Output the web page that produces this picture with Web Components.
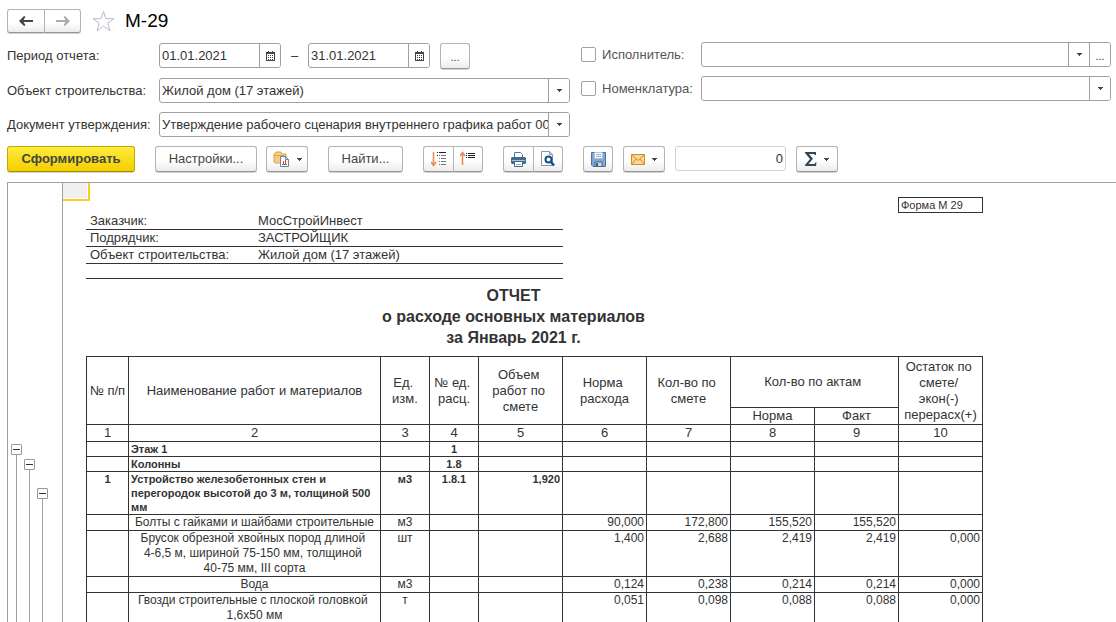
<!DOCTYPE html>
<html lang="ru">
<head>
<meta charset="utf-8">
<title>М-29</title>
<style>
  body { margin: 0; background: #fff; color: #333; font: 13px/16px "Liberation Sans", Arial, sans-serif; }
</style>
</head>
<body>
<report-app></report-app>
<script>
const base = `
  *, *::before, *::after { box-sizing: border-box; }
  button, input, select { font: inherit; color: inherit; margin: 0; }
`;

function element(name, html, setup) {
  const template = document.createElement('template');
  template.innerHTML = html;
  customElements.define(name, class extends HTMLElement {
    constructor() {
      super();
      this.attachShadow({ mode: 'open' });
    }
    connectedCallback() {
      if (this.shadowRoot.firstChild) return;
      this.shadowRoot.append(template.content.cloneNode(true));
      if (setup) setup(this, this.shadowRoot);
    }
  });
}

const icons = {
  back: [16, 12, '<path d="M1 6 6 1l1.500.8L5.500 5H15v2H5.500l2 3.200L6 11z" fill="#444"/>'],
  forward: [16, 12, '<path d="M15 6 10 1 8.500 1.800 10.500 5H1v2H10.500l-2 3.200L10 11z" fill="#aaa"/>'],
  star: [23, 22, '<path d="M11.500 1.500 14 8.700H22L15.700 13.200 18 20.700 11.500 16.200 5 20.700 7.300 13.200 1 8.700H9z" fill="#fff" stroke="#b9bcc4"/>'],
  calendar: [9, 10, '<path d="M0 1h9v9H0z" fill="#444"/><path d="M2 0h1v2H2zM6 0h1v2H6z" fill="#444"/><path d="M1 3h7v6H1z" fill="#fff"/><path d="M2 4h1v1H2zM4 4h1v1H4zM6 4h1v1H6zM2 6h1v1H2zM4 6h1v1H4zM6 6h1v1H6zM2 8h1v1H2zM4 8h1v1H4zM6 8h1v1H6z" fill="#444"/>'],
  caret: [5, 3, '<path d="M0 0h5v1H4v1H3v1H2V2H1V1H0z" fill="#444"/>'],
  variants: [17, 17, '<path d="M1 3 3 1h5l1 2h4v9H2L1 11z" fill="#f5cf80" stroke="#d9a64d"/><path d="M1.500 4.500h11" stroke="#d9a64d"/><path d="M7.500 5.500h5l3 3v7h-8z" fill="#fff" stroke="#6487a5"/><path d="M12.500 5.500v3h3" fill="none" stroke="#6487a5"/><path d="M10.500 10v3M12.500 9v4" stroke="#e33"/><path d="M9 13.500h5" stroke="#3aa357"/>'],
  expand: [16, 16, '<path d="M2.500 1v13M0 11l2.500 3.500L5 11" fill="none" stroke="#f0854e" stroke-width="1.500"/><path d="M6 1.500h1M8 1.500h7M6 4.500h1" stroke="#222"/><path d="M8 4.500h1M10 4.500h5M8 7.500h1M10 7.500h5M8 10.500h1M10 10.500h5M8 13.500h1M10 13.500h5" stroke="#777"/>'],
  collapse: [16, 16, '<path d="M2.500 2v12M0 5l2.500-3.500L5 5" fill="none" stroke="#f0854e" stroke-width="1.500"/><path d="M6 2.500h1M8 2.500h7M6 4.500h1M8 4.500h7M6 6.500h1M8 6.500h7" stroke="#222"/>'],
  print: [15, 15, '<path d="M3.500 5V.5h6l2 2V5" fill="#fff" stroke="#54799b"/><path d="M1 5h13l1 1v5l-1 1H1l-1-1V6z" fill="#416b92"/><path d="M1 8.500h13" stroke="#a7c0d6"/><path d="M3.500 9.500h8v5h-8z" fill="#fff" stroke="#416b92"/><path d="M5 12.500h5" stroke="#8fa9c0"/>'],
  preview: [16, 16, '<path d="M1.500.5h8l3 3v11h-11z" fill="#fff" stroke="#7a98b3"/><path d="M9.500.5v3h3" fill="none" stroke="#7a98b3"/><circle cx="8.500" cy="8.500" r="3" fill="#fff" stroke="#14507f" stroke-width="2"/><path d="M10.500 10.500 14 14.500" stroke="#14507f" stroke-width="2.500"/>'],
  save: [15, 15, '<path d="M.5.500h14v14H2l-1.500-1.500z" fill="#7fa8d3" stroke="#4576a3"/><path d="M3.500.500h8v6h-8z" fill="#fff" stroke="#a9c4de"/><path d="M5 2.500h5M5 4.500h5" stroke="#9ab"/><path d="M4 10h7v4.500H4z" fill="#cfd9d8" stroke="#47698b"/><path d="M5 11h2v3H5z" fill="#45607a"/>'],
  mail: [14, 11, '<path d="M.5.500h13v10H.500z" fill="#fbd98e" stroke="#cf8f2b"/><path d="M.500.500 7 6.500 13.500.500M.500 10.500 5 5M13.500 10.500 9 5" fill="none" stroke="#cf8f2b"/>'],
  sum: [12, 14, '<path d="M0 0h11v3h-1L9 2H4l4 4.700L3.500 12H9.500l1-1.500h1L11 14H0v-1l5-6L0 1z" fill="#2f4858"/>'],
};

element('ui-icon', `<style>:host { display: block; flex: none; } svg { display: block; }</style>`, (host, root) => {
  const [w, h, body] = icons[host.getAttribute('name')];
  root.innerHTML += `<svg width="${w}" height="${h}" viewBox="0 0 ${w} ${h}" aria-hidden="true">${body}</svg>`;
});

element('tool-button', `
<style>${base}
  :host { display: block; flex: none; }
  button { display: flex; align-items: center; justify-content: center; gap: 7px; width: 100%; height: var(--height, 26px);
    padding: 0; border: 1px solid #b3b3b3; border-bottom-color: #969696; border-radius: 3px;
    background: linear-gradient(#fff 55%, #ececec); box-shadow: 0 1px 0 #d4d4d4; color: #444; white-space: nowrap; }
  :host([primary]) button { border-color: #c7a600; border-bottom-color: #a88c00; background: linear-gradient(#ffec3d, #f2cf00); font-weight: bold; }
  :host([first]) button { border-radius: 3px 0 0 3px; border-right: 0; }
  :host([last]) button { border-radius: 0 3px 3px 0; }
  :host([small]) button { font-size: 11px; padding-top: 2px; }
</style>
<button type="button"><slot></slot></button>`, (host, root) => {
  if (host.title) root.querySelector('button').setAttribute('aria-label', host.title);
});

const fieldStyle = `
  .box { display: flex; height: 25px; border: 1px solid #a0a0a0; border-radius: 3px; background: #fff; overflow: hidden; }
  .box input, .box select { flex: 1; min-width: 0; border: 0; padding: 0 0 0 2px; background: none; outline: 0; appearance: none; text-overflow: clip; }
  .box button, .cell { display: flex; align-items: center; justify-content: center; width: 21px; flex: none; padding: 0; border: 0; border-left: 1px solid #a0a0a0; background: #fff; }
`;

element('date-field', `
<style>${base}${fieldStyle}
  :host { display: block; width: 122px; }
</style>
<div class="box"><input type="text"><button type="button" aria-label="Выбрать дату"><ui-icon name="calendar"></ui-icon></button></div>`, (host, root) => {
  const input = root.querySelector('input');
  input.value = host.getAttribute('value');
  input.setAttribute('aria-label', host.getAttribute('label'));
});

element('select-row', `
<style>${base}${fieldStyle}
  :host { display: flex; align-items: center; }
  .caption { flex: none; width: var(--caption, 152px); display: flex; align-items: center; gap: 6px; }
  .caption input { appearance: none; width: 15px; height: 15px; border: 1px solid #a0a0a0; border-radius: 2px; background: #fff; }
  .box { flex: 1; min-width: 0; }
  :host([filter]) label { color: #555; }
  .box .more { padding-top: 2px; font-size: 11px; }
</style>
<div class="caption"><label for="value"></label></div>
<div class="box"><select id="value"><option></option></select><span class="cell"><ui-icon name="caret"></ui-icon></span></div>`, (host, root) => {
  const label = root.querySelector('label');
  label.textContent = host.getAttribute('label');
  root.querySelector('option').textContent = host.getAttribute('value') || '';
  if (host.hasAttribute('filter')) {
    const check = document.createElement('input');
    check.type = 'checkbox';
    check.id = 'use';
    label.before(check);
    label.htmlFor = 'use';
    root.querySelector('select').setAttribute('aria-label', host.getAttribute('label'));
  }
  if (host.hasAttribute('more')) {
    const more = document.createElement('button');
    more.type = 'button';
    more.className = 'more';
    more.textContent = '...';
    root.querySelector('.box').append(more);
  }
});

element('period-row', `
<style>${base}
  :host { display: flex; align-items: center; }
  .caption { flex: none; width: 152px; }
  .dash { width: 27px; text-align: center; }
  tool-button { width: 30px; margin-left: 10px; }
</style>
<span class="caption">Период отчета:</span>
<date-field value="01.01.2021" label="Начало периода"></date-field>
<span class="dash">–</span>
<date-field value="31.01.2021" label="Конец периода"></date-field>
<tool-button small title="Выбрать период">...</tool-button>`);

element('title-bar', `
<style>${base}
  :host { display: flex; align-items: center; height: 25px; }
  tool-button { --height: 24px; width: 37px; }
  ui-icon.star { margin: 0 10px 0 11px; }
  h1 { margin: 0; font: 19px/24px "Liberation Sans", Arial, sans-serif; color: #000; }
</style>
<tool-button first title="Назад"><ui-icon name="back"></ui-icon></tool-button>
<tool-button last title="Вперед"><ui-icon name="forward"></ui-icon></tool-button>
<ui-icon class="star" name="star"></ui-icon>
<h1>М-29</h1>`);

element('report-toolbar', `
<style>${base}
  :host { display: flex; align-items: center; gap: 20px; }
  .group { display: flex; flex: none; }
  .spaced { gap: 9px; }
  .totals { gap: 10px; }
  .w30 { width: 30px; }
  .w42 { width: 42px; }
  .w75 { width: 75px; }
  .w102 { width: 102px; }
  .w128 { width: 128px; }
  input { width: 111px; height: 25px; padding: 0 2px; border: 1px solid #d0d0d0; border-radius: 3px; text-align: right; outline: 0; }
</style>
<tool-button primary class="w128">Сформировать</tool-button>
<div class="group spaced">
  <tool-button class="w102">Настройки...</tool-button>
  <tool-button class="w42" title="Варианты отчета"><ui-icon name="variants"></ui-icon><ui-icon name="caret"></ui-icon></tool-button>
</div>
<tool-button class="w75">Найти...</tool-button>
<div class="group">
  <tool-button first class="w30" title="Развернуть"><ui-icon name="expand"></ui-icon></tool-button>
  <tool-button last class="w30" title="Свернуть"><ui-icon name="collapse"></ui-icon></tool-button>
</div>
<div class="group">
  <tool-button first class="w30" title="Печать"><ui-icon name="print"></ui-icon></tool-button>
  <tool-button last class="w30" title="Просмотр"><ui-icon name="preview"></ui-icon></tool-button>
</div>
<div class="group totals">
  <tool-button class="w30" title="Сохранить"><ui-icon name="save"></ui-icon></tool-button>
  <tool-button class="w42" title="Отправить"><ui-icon name="mail"></ui-icon><ui-icon name="caret"></ui-icon></tool-button>
  <input type="text" value="0" aria-label="Сумма">
  <tool-button class="w42" title="Показатели"><ui-icon name="sum"></ui-icon><ui-icon name="caret"></ui-icon></tool-button>
</div>`);

element('outline-gutter', `
<style>${base}
  :host { display: flex; gap: 2px; width: 55px; flex: none; padding-left: 3px; border-right: 1px solid #a0a0a0; }
  .branch { display: flex; flex-direction: column; align-items: center; }
  .floor { padding-top: 261px; }
  .section { padding-top: 276px; }
  .work { padding-top: 305px; }
  button { width: 11px; height: 11px; flex: none; padding: 0; border: 1px solid #999; border-radius: 1px; background: linear-gradient(#333, #333) center / 7px 1px no-repeat #fff; }
  .line { flex: 1; width: 1px; background: #a0a0a0; }
</style>
<div class="branch floor"><button type="button" aria-label="Свернуть этаж"></button><span class="line"></span></div>
<div class="branch section"><button type="button" aria-label="Свернуть раздел"></button><span class="line"></span></div>
<div class="branch work"><button type="button" aria-label="Свернуть работу"></button><span class="line"></span></div>`);

element('materials-table', `
<style>${base}
  :host { display: block; }
  table { border-collapse: collapse; table-layout: fixed; width: 897px; }
  th, td { border: 1px solid #333; padding: 0 2px; vertical-align: top; }
  th { font-weight: normal; vertical-align: middle; }
  thead { line-height: 16px; }
  thead th { padding: 0; }
  .tall { height: 51px; }
  tbody { font-size: 12px; line-height: 15px; }
  tbody td:nth-child(n+5) { text-align: right; }
  td { text-align: center; }
  tr.bold { font-size: 11px; line-height: 14px; font-weight: bold; }
  tr.bold td:nth-child(2) { text-align: left; }
</style>
<table>
  <colgroup><col style="width:42px"><col style="width:252px"><col style="width:49px"><col style="width:49px"><col style="width:84px"><col style="width:84px"><col style="width:84px"><col style="width:84px"><col style="width:84px"><col></colgroup>
  <thead>
    <tr class="tall">
      <th rowspan="2">№ п/п</th><th rowspan="2">Наименование работ и материалов</th><th rowspan="2">Ед.&nbsp;<br>изм.</th><th rowspan="2">№ ед.&nbsp;<br>расц.</th>
      <th rowspan="2">Объем&nbsp;<br>работ по&nbsp;<br>смете</th><th rowspan="2">Норма&nbsp;<br>расхода</th><th rowspan="2">Кол-во по&nbsp;<br>смете</th><th colspan="2">Кол-во по актам&nbsp;</th>
      <th rowspan="2">Остаток по&nbsp;<br>смете/&nbsp;<br>экон(-)&nbsp;<br>перерасх(+)</th>
    </tr>
    <tr><th>Норма</th><th>Факт</th></tr>
    <tr><th>1</th><th>2</th><th>3</th><th>4</th><th>5</th><th>6</th><th>7</th><th>8</th><th>9</th><th>10</th></tr>
  </thead>
  <tbody></tbody>
</table>`, (host, root) => {
  const rows = [
    ['bold', '', 'Этаж 1', '', '1', '', '', '', '', '', ''],
    ['bold', '', 'Колонны', '', '1.8', '', '', '', '', '', ''],
    ['bold', '1', 'Устройство железобетонных стен и<br>перегородок высотой до 3 м, толщиной 500<br>мм', 'м3', '1.8.1', '1,920', '', '', '', '', ''],
    ['', '', 'Болты с гайками и шайбами строительные', 'м3', '', '', '90,000', '172,800', '155,520', '155,520', ''],
    ['', '', 'Брусок обрезной хвойных пород длиной&nbsp;<br>4-6,5 м, шириной 75-150 мм, толщиной&nbsp;<br>40-75 мм, III сорта', 'шт', '', '', '1,400', '2,688', '2,419', '2,419', '0,000'],
    ['', '', 'Вода', 'м3', '', '', '0,124', '0,238', '0,214', '0,214', '0,000'],
    ['', '', 'Гвозди строительные с плоской головкой&nbsp;<br>1,6х50 мм', 'т', '', '', '0,051', '0,098', '0,088', '0,088', '0,000'],
  ];
  root.querySelector('tbody').innerHTML = rows.map(([kind, ...cells]) =>
    `<tr class="${kind}">${cells.map(c => `<td>${c}</td>`).join('')}</tr>`).join('');
});

element('report-sheet', `
<style>${base}
  :host { display: grid; grid-template-columns: 23px 897px; align-items: start; align-content: start; flex: 1; min-width: 0; overflow: hidden; }
  .page { grid-column: 2; grid-row: 1; padding-top: 14px; }
  .cursor { grid-column: 1; grid-row: 1; width: 27px; height: 18px; border: solid #fc2; border-width: 0 2px 2px 0; box-shadow: inset -1px -1px #fff; background: #f0f0f0; }
  .form { width: 85px; height: 16px; margin-left: auto; padding-left: 2px; border: 1px solid #333; font-size: 11px; line-height: 14px; }
  dl { width: 477px; margin: 0; }
  dl div { display: flex; height: 17px; padding-left: 4px; border-bottom: 1px solid #333; }
  dl div.blank { height: 15px; }
  dt { width: 168px; }
  dd { margin: 0; }
  h2 { margin: 6px 84px 8px 42px; font-size: 16px; line-height: 21px; text-align: center; }
</style>
<div class="cursor"></div>
<div class="page">
  <div class="form">Форма М 29</div>
  <dl>
    <div><dt>Заказчик:</dt><dd>МосСтройИнвест</dd></div>
    <div><dt>Подрядчик:</dt><dd>ЗАСТРОЙЩИК</dd></div>
    <div><dt>Объект строительства:</dt><dd>Жилой дом (17 этажей)</dd></div>
    <div class="blank"></div>
  </dl>
  <h2>ОТЧЕТ<br>о расходе основных материалов<br>за Январь 2021 г.</h2>
  <materials-table></materials-table>
</div>`);

element('report-app', `
<style>${base}
  :host { display: flex; flex-direction: column; box-sizing: border-box; height: 100vh; padding: 8px 0 0 7px; overflow: hidden; }
  .form { display: grid; grid-template-columns: minmax(0, 17fr) minmax(0, 16fr); column-gap: 11px; margin: 9px 5px 9px 0; }
  .column { display: flex; flex-direction: column; gap: 9px; }
  period-row { height: 27px; }
  select-row { height: 25px; }
  .filters select-row { --caption: 120px; }
  .report { display: flex; flex: 1; min-height: 0; margin-top: 10px; border: solid #a0a0a0; border-width: 1px 0 0 1px; }
</style>
<title-bar></title-bar>
<div class="form">
  <div class="column">
    <period-row></period-row>
    <select-row label="Объект строительства:" value="Жилой дом (17 этажей)"></select-row>
    <select-row label="Документ утверждения:" value="Утверждение рабочего сценария внутреннего графика работ 00"></select-row>
  </div>
  <div class="column filters">
    <select-row filter more label="Исполнитель:"></select-row>
    <select-row filter label="Номенклатура:"></select-row>
  </div>
</div>
<report-toolbar></report-toolbar>
<div class="report">
  <outline-gutter></outline-gutter>
  <report-sheet></report-sheet>
</div>`);
</script>
</body>
</html>
